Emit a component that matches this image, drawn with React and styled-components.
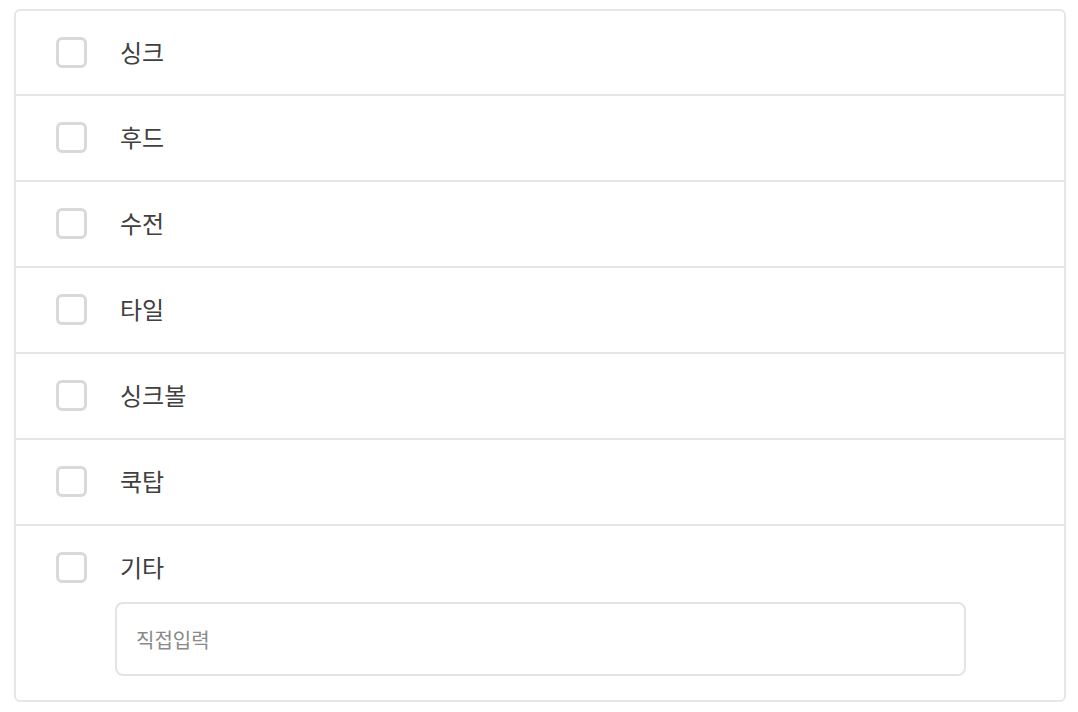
import styled, { createGlobalStyle } from 'styled-components';

const GlobalStyle = createGlobalStyle`
    body {
        margin: 0;
        background: #fff;
        font-family: "Noto Sans CJK KR", "Noto Sans", sans-serif;
    }
`;

const Page = styled.div`
    padding: 9px 13px 10px 14px;
`;

const Panel = styled.div`
    width: 1052px;
    box-sizing: border-box;
    border: 2px solid #e6e6e6;
    border-radius: 6px;
    background: #fff;
`;

const Row = styled.div`
    padding: 26px 40px ${p => (p.$last ? '24px' : '27px')};
    border-bottom: ${p => (p.$last ? 'none' : '2px solid #e6e6e6')};
    &:first-child {
        padding-bottom: 26px;
    }
`;

const Line = styled.label`
    display: flex;
    align-items: center;
    gap: 33px;
    height: 31px;
    cursor: pointer;
`;

const Box = styled.span`
    width: 31px;
    height: 31px;
    box-sizing: border-box;
    border: 3px solid #d9d9d9;
    border-radius: 6px;
    background: #fff;
    flex-shrink: 0;
`;

const Label = styled.span`
    font-size: 24px;
    color: #404040;
    line-height: 1;
    position: relative;
    top: -1px;
`;

const Input = styled.input`
    display: block;
    box-sizing: border-box;
    margin: 19px 0 0 59px;
    width: 851px;
    height: 74px;
    padding: 0 19px;
    border: 2px solid #e4e4e4;
    border-radius: 8px;
    font-family: "Noto Sans CJK KR", "Noto Sans", sans-serif;
    font-size: 20px;
    color: #333;
    outline: none;
    &::placeholder {
        color: #8a8a8a;
    }
`;

const items = ['싱크', '후드', '수전', '타일', '싱크볼', '쿡탑', '기타'];

export default function App() {
    return (
        <Page>
            <GlobalStyle />
            <Panel>
                {items.map((name, i) => {
                    const last = i === items.length - 1;
                    return (
                        <Row key={name} $last={last}>
                            <Line>
                                <Box />
                                <Label>{name}</Label>
                            </Line>
                            {last && <Input placeholder="직접입력" />}
                        </Row>
                    );
                })}
            </Panel>
        </Page>
    );
}
